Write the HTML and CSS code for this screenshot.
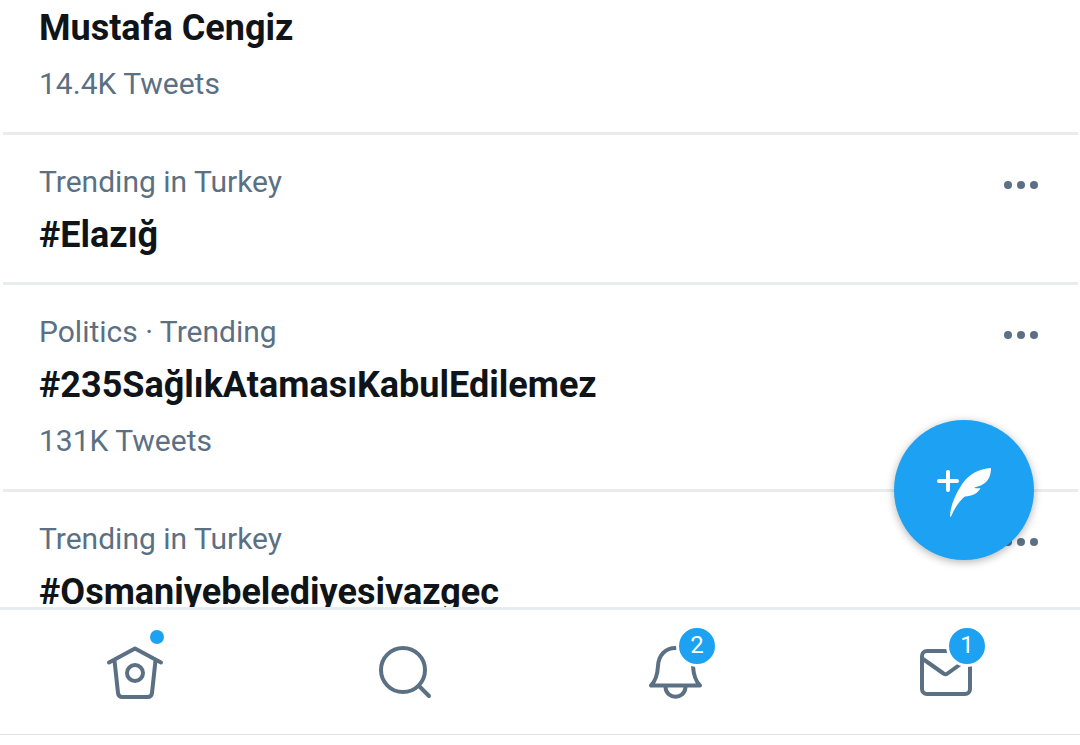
FILE: index.html
```html
<!DOCTYPE html>
<html lang="en">
<head>
    <meta charset="utf-8">
    <meta name="viewport" content="width=device-width, initial-scale=1">
    <title>Trends</title>
    <link rel="stylesheet" href="styles.css">
</head>
<body>

    <main class="trends">
        <article class="trend trend-first">
            <div class="trend-text">
                <h2>Mustafa Cengiz</h2>
                <p class="count">14.4K Tweets</p>
            </div>
        </article>

        <article class="trend">
            <div class="trend-text">
                <p class="context">Trending in Turkey</p>
                <h2>#Elazığ</h2>
            </div>
            <button class="more" type="button" aria-label="More">
                <svg width="36" height="10" viewBox="0 0 36 10"><circle cx="5" cy="5" r="4"/><circle cx="18" cy="5" r="4"/><circle cx="31" cy="5" r="4"/></svg>
            </button>
        </article>

        <article class="trend">
            <div class="trend-text">
                <p class="context">Politics · Trending</p>
                <h2>#235SağlıkAtamasıKabulEdilemez</h2>
                <p class="count">131K Tweets</p>
            </div>
            <button class="more" type="button" aria-label="More">
                <svg width="36" height="10" viewBox="0 0 36 10"><circle cx="5" cy="5" r="4"/><circle cx="18" cy="5" r="4"/><circle cx="31" cy="5" r="4"/></svg>
            </button>
        </article>

        <article class="trend">
            <div class="trend-text">
                <p class="context">Trending in Turkey</p>
                <h2>#Osmaniyebelediyesivazgec</h2>
            </div>
            <button class="more" type="button" aria-label="More">
                <svg width="36" height="10" viewBox="0 0 36 10"><circle cx="5" cy="5" r="4"/><circle cx="18" cy="5" r="4"/><circle cx="31" cy="5" r="4"/></svg>
            </button>
        </article>
    </main>

    <button class="compose" type="button" aria-label="New Tweet">
        <svg width="140" height="140" viewBox="0 0 140 140">
            <path class="plus" d="M54 52V70M45 61H63"/>
            <path class="feather" d="M97 48C85 49 75 54 68.500 63.500C61.500 74 56.500 85 56 96.500C56.500 97 57 96.500 57.300 96C60.500 88.500 65 81 71 76.500C78 76 84 73.500 86.500 68C84 68.500 82 68.500 80 67.500C88 66 97 62 97 48Z"/>
        </svg>
    </button>

    <nav class="tabbar">
        <a href="#home" aria-label="Home">
            <span class="icon">
                <svg width="64" height="64" viewBox="0 0 64 64">
                    <path d="M6 22.500L32 8.500L58 22.500M11.500 20.500L15 53Q15.500 57 19.500 57H44.500Q48.500 57 49 53L52.500 20.500"/>
                    <circle cx="32" cy="33" r="8"/>
                </svg>
                <span class="dot"></span>
            </span>
        </a>
        <a href="#search" aria-label="Search">
            <span class="icon">
                <svg width="64" height="64" viewBox="0 0 64 64">
                    <circle cx="30" cy="30" r="22"/>
                    <path d="M46 46L56 56"/>
                </svg>
            </span>
        </a>
        <a href="#notifications" aria-label="Notifications">
            <span class="icon">
                <svg width="64" height="64" viewBox="0 0 64 64">
                    <path d="M32.500 8C22 8 15.500 15.500 15 26C14.500 35 12.500 41 8 45.500H57C52.500 41 50.500 35 50 26C49.500 15.500 43 8 32.500 8ZM22.500 47C23 60 42 60 42.500 47"/>
                </svg>
                <span class="badge">2</span>
            </span>
        </a>
        <a href="#messages" aria-label="Messages">
            <span class="icon">
                <svg width="64" height="64" viewBox="0 0 64 64">
                    <rect x="9" y="11" width="48" height="43" rx="5"/>
                    <path d="M10 19L30.500 33.500Q32.500 35 34.500 33.500L56 18"/>
                </svg>
                <span class="badge">1</span>
            </span>
        </a>
    </nav>

</body>
</html>
```
FILE: styles.css
```css
* { box-sizing: border-box; }
body {
    font-family: Roboto, sans-serif;
    margin: 0;
    height: 100vh;
    padding-bottom: 10px;
    display: flex;
    flex-direction: column;
    background: #fff;
    color: #0f1419;
}
button {
    border: none;
    padding: 0;
    cursor: pointer;
}
svg { display: block; }

/* trend list */
.trends {
    flex: 1;
    min-height: 0;
    overflow: hidden;
}
.trend {
    display: flex;
    justify-content: space-between;
    align-items: flex-start;
    margin: 0 2px 0 3px;
    padding: 27px 39px 22px 36px;
    border-bottom: 3px solid #e9ecee;
}
.trend-first { padding-top: 3px; }
.trend h2 {
    margin: 8px 0 0;
    font-size: 36px;
    line-height: 50px;
    font-weight: 700;
}
.trend-first h2 { margin-top: 0; }
.context, .count {
    margin: 0;
    font-size: 30px;
    line-height: 40px;
    color: #5b7083;
}
.count { padding: 11px 0 6px; }
.more {
    display: flex;
    align-items: center;
    height: 46px;
    background: none;
}
.more svg { fill: #5b7083; }

/* floating button */
.compose {
    position: fixed;
    right: 46px;
    bottom: 185px;
    width: 140px;
    height: 140px;
    border-radius: 50%;
    background: #1da1f2;
    box-shadow: 0 2px 8px rgba(0, 0, 0, 0.3);
}
.plus {
    stroke: #fff;
    stroke-width: 4;
    stroke-linecap: round;
}
.feather { fill: #fff; }

/* bottom tabs */
.tabbar {
    display: flex;
    height: 128px;
    border-top: 3px solid #e9ecee;
    border-bottom: 1px solid #e1e4e6;
}
.tabbar a {
    flex: 1;
    display: flex;
    align-items: center;
    justify-content: center;
}
.icon { position: relative; }
.icon svg {
    fill: none;
    stroke: #5b7083;
    stroke-width: 4;
    stroke-linecap: round;
    stroke-linejoin: round;
}
.dot {
    position: absolute;
    top: -10px;
    right: 3px;
    width: 14px;
    height: 14px;
    border-radius: 50%;
    background: #1da1f2;
}
.badge {
    position: absolute;
    top: -15px;
    right: -11px;
    width: 42px;
    height: 42px;
    border: 3px solid #fff;
    border-radius: 50%;
    background: #1da1f2;
    color: #fff;
    font-size: 24px;
    line-height: 35px;
    text-align: center;
}
```
